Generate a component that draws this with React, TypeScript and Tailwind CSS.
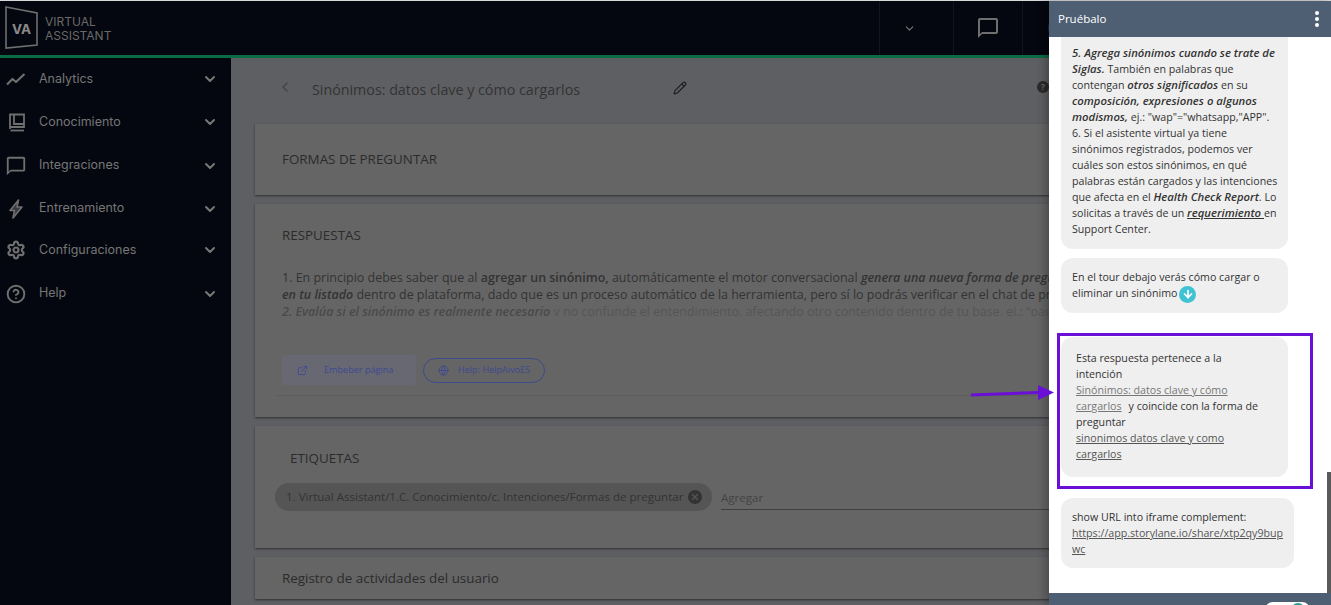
import { ArrowDown, ChevronDown, ChevronLeft, Pencil, Globe, ExternalLink, Settings, CircleHelp, X } from "lucide-react";
import { MdOutlineChatBubbleOutline } from "react-icons/md";
import type { ReactNode } from "react";

const navItems = [
  {
    label: "Analytics",
    h: "h-[42px]",
    icon: (
      <svg width="20" height="20" viewBox="0 0 20 20" fill="none" stroke="currentColor" strokeWidth="2.2" strokeLinejoin="round">
        <path d="M1 15.5 L6.5 10 L10 13 L18.5 5" />
      </svg>
    ),
  },
  {
    label: "Conocimiento",
    h: "h-[44px]",
    icon: (
      <svg width="20" height="20" viewBox="0 0 20 20" fill="none" stroke="currentColor" strokeWidth="1.8" className="translate-x-[1px]">
        <path d="M3 17 V2.5 H17 V15 H3" />
        <path d="M7 2.5 V12 H17" />
        <path d="M3.5 18.5 H17" />
      </svg>
    ),
  },
  {
    label: "Integraciones",
    h: "h-[43px]",
    icon: <MdOutlineChatBubbleOutline size={22} className="-ml-[1px]" />,
  },
  {
    label: "Entrenamiento",
    h: "h-[43px]",
    icon: (
      <svg width="20" height="20" viewBox="0 0 20 20" fill="currentColor" stroke="currentColor" strokeWidth="1.6" strokeLinejoin="round">
        <path d="M12.5 1 L4 11.5 H8.5 L7 19 L16 8 H11 Z" fillOpacity="0.5" />
      </svg>
    ),
  },
  {
    label: "Configuraciones",
    h: "h-[42px] pb-[2px]",
    icon: <Settings size={20} strokeWidth={2.6} />,
  },
  {
    label: "Help",
    h: "h-[43px]",
    icon: <CircleHelp size={20} strokeWidth={2.3} />,
  },
];

function Card({ className, children }: { className: string; children: ReactNode }) {
  return <section className={`bg-[#656565] shadow-[0_1px_2px_rgba(0,0,0,0.5)] ${className}`}>{children}</section>;
}

function Bubble({ className, children }: { className: string; children: ReactNode }) {
  return <div className={`rounded-xl bg-[#efefef] text-[10.65px] leading-[16px] text-[#333] ${className}`}>{children}</div>;
}

function Em({ children }: { children: ReactNode }) {
  return <strong className="text-[11.3px] font-semibold italic">{children}</strong>;
}

export default function App() {
  return (
    <div className="relative flex h-[605px] w-[1331px] flex-col overflow-hidden bg-[#5e5f62] font-['Open_Sans',sans-serif]">
      <header className="flex h-[58px] shrink-0 items-stretch border-t border-[#d8d8d8] border-b-[3px] border-b-[#0b6b45] bg-[#04070f]">
        <div className="flex items-center gap-[6px] pl-[5px]">
          <svg width="34" height="44" viewBox="0 0 34 44" fill="none" className="text-[#6e6e6e]">
            <path d="M1 1 L32 7 L32 39 L1 42 Z" stroke="currentColor" strokeWidth="1.6" />
            <text x="7" y="28" fill="#8a8a8a" fontSize="13.5" fontWeight="700" fontFamily="Inter, sans-serif">VA</text>
          </svg>
          <div className="pt-[2px] font-['Inter',sans-serif] text-[12px] leading-[14px] text-[#6a6a6a]">
            <div>VIRTUAL</div>
            <div>ASSISTANT</div>
          </div>
        </div>
        <div className="ml-auto flex w-[452px] items-stretch">
          <div className="flex w-[75px] items-center justify-center border-x border-[#10151f] pr-[14px] text-[#777]">
            <ChevronDown size={13} strokeWidth={2} />
          </div>
          <div className="flex w-[69px] items-center justify-center border-r border-[#10151f] text-[#6f6f6f]">
            <MdOutlineChatBubbleOutline size={24} />
          </div>
          <div className="ml-[25px] mt-[14px] h-[26px] w-[26px] rounded-full bg-[#1a2a3a]" />
        </div>
      </header>

      <div className="flex min-h-0 flex-1">
        <nav className="w-[231px] shrink-0 bg-[#04070f] font-['Inter',sans-serif] text-[12.5px] text-[#767676]">
          {navItems.map((item) => (
            <div key={item.label} className={`flex items-center pl-[6px] pr-[13px] ${item.h}`}>
              <span className="flex w-[33px] shrink-0 text-[#6f6f6f]">{item.icon}</span>
              <span className="flex-1">{item.label}</span>
              <ChevronDown size={16} strokeWidth={3} className="text-[#777]" />
            </div>
          ))}
        </nav>

        <main className="min-w-0 flex-1 overflow-hidden pl-[24px] text-[#2b2b2b]">
          <div className="flex h-[66px] items-center pb-[2px] pl-[22px]">
            <ChevronLeft size={16} className="mr-[19px] -mt-[6px] text-[#444]" />
            <h1 className="text-[14.27px] font-normal text-[#333]">Sinónimos: datos clave y cómo cargarlos</h1>
            <Pencil size={14} className="ml-[93px] -mt-[4px] text-[#1f1f1f]" />
            <span className="ml-[350px] -mt-[7px] flex h-[12px] w-[12px] items-center justify-center rounded-full bg-[#2b2b2b] text-[9px] font-bold text-[#666]">?</span>
          </div>

          <Card className="flex h-[71px] items-center pb-[1px] pl-[27px] text-[13.4px]">FORMAS DE PREGUNTAR</Card>

          <Card className="mt-[9px] h-[213px] pl-[27px] pt-[21px]">
            <h2 className="text-[13.4px] leading-[20px]">RESPUESTAS</h2>
            <div className="mt-[24px] h-[47px] w-[790px] overflow-hidden whitespace-nowrap text-[12.48px] leading-[17px] text-[#333]">
              <p>1. En principio debes saber que al <strong className="font-semibold">agregar un sinónimo,</strong> automáticamente el motor conversacional <strong className="font-semibold italic">genera una nueva forma de preguntar</strong></p>
              <p><strong className="font-semibold italic">en tu listado</strong> dentro de plataforma, dado que es un proceso automático de la herramienta, pero sí lo podrás verificar en el chat de pruebas</p>
              <p className="text-[#555]"><strong className="font-semibold italic text-[#4a4a4a]">2. Evalúa si el sinónimo es realmente necesario</strong> y no confunde el entendimiento, afectando otro contenido dentro de tu base, ej.: “pago”</p>
            </div>
            <div className="mt-[39px] flex items-center gap-[7px] text-[9.1px]">
              <div className="flex h-[30px] w-[134px] items-center rounded-[3px] bg-[#686873] pl-[15px] text-[#3d4a8f]">
                <ExternalLink size={11} className="mr-[16px]" />
                Embeber página
              </div>
              <div className="flex h-[25px] w-[122px] items-center rounded-full border border-[#3d4a8f] pl-[14px] text-[#3d4a8f]">
                <Globe size={11} className="mr-[9px]" />
                Help: HelpAivoES
              </div>
            </div>
            <div className="-ml-[6px] mt-[10px] h-px bg-[#5d5d5d]" />
          </Card>

          <Card className="mt-[9px] h-[122px] pt-[22px]">
            <h2 className="pl-[35px] text-[13.4px] leading-[20px]">ETIQUETAS</h2>
            <div className="mt-[15px] flex items-center pl-[20px]">
              <div className="flex h-[28px] w-[437px] shrink-0 items-center whitespace-nowrap rounded-full bg-[#555] pl-[11px] text-[11.55px] text-[#333]">
                1. Virtual Assistant/1.C. Conocimiento/c. Intenciones/Formas de preguntar
                <span className="ml-[5px] flex h-[14px] w-[14px] items-center justify-center rounded-full bg-[#333] text-[#555]">
                  <X size={10} strokeWidth={3} />
                </span>
              </div>
              <div className="ml-[9px] h-[25px] flex-1 border-b border-[#3f3f3f] text-[11.55px] leading-[25px] text-[#444]">Agregar</div>
            </div>
          </Card>

          <Card className="mt-[9px] flex h-[42px] items-center pl-[27px] text-[13.4px]">Registro de actividades del usuario</Card>
        </main>
      </div>

      <aside className="absolute bottom-0 right-0 top-[1px] flex w-[282px] flex-col bg-white shadow-[-4px_0_8px_rgba(0,0,0,0.25)]">
        <div className="flex h-[36px] shrink-0 items-center justify-between bg-[#4f5f73] pl-[9px] pr-[12px] text-[11.5px] text-white">
          <span>Pruébalo</span>
          <span className="flex flex-col gap-[2px]">
            <i className="h-[4px] w-[4px] rounded-full bg-white" />
            <i className="h-[4px] w-[4px] rounded-full bg-white" />
            <i className="h-[4px] w-[4px] rounded-full bg-white" />
          </span>
        </div>

        <div className="min-h-0 flex-1 overflow-hidden pl-[12px]">
          <Bubble className="h-[212px] w-[227px] whitespace-nowrap rounded-t-none pl-[11px] pt-[8px]">
            <Em>5. Agrega sinónimos cuando se trate de</Em>
            <br />
            <Em>Siglas.</Em> También en palabras que
            <br />
            contengan <Em>otros significados</Em> en su
            <br />
            <Em>composición, expresiones o algunos</Em>
            <br />
            <Em>modismos,</Em> ej.: "wap"="whatsapp,"APP".
            <br />
            6. Si el asistente virtual ya tiene
            <br />
            sinónimos registrados, podemos ver
            <br />
            cuáles son estos sinónimos, en qué
            <br />
            palabras están cargados y las intenciones
            <br />
            que afecta en el <Em>Health Check Report</Em>. Lo
            <br />
            solicitas a través de un <a className="text-[11.3px] font-semibold italic underline">requerimiento </a>en
            <br />
            Support Center.
          </Bubble>
          <Bubble className="mt-[9px] h-[55px] w-[227px] px-[11px] pt-[11px]">
            En el tour debajo verás cómo cargar o eliminar un sinónimo
            <span className="ml-[2px] inline-flex h-[17px] w-[17px] items-center justify-center rounded-full bg-[#3fc3d4] align-middle text-white">
              <ArrowDown size={12} strokeWidth={3.5} />
            </span>
          </Bubble>
          <Bubble className="mt-[24px] h-[140px] w-[227px] px-[15px] pt-[13px]">
            Esta respuesta pertenece a la
            <br />
            intención
            <br />
            <a className="text-[#777] underline">Sinónimos: datos clave y cómo</a>
            <br />
            <a className="text-[#777] underline">cargarlos</a>
            <span className="ml-[7px]">y coincide con la forma de</span>
            <br />
            preguntar
            <br />
            <a className="text-[#555] underline">sinonimos datos clave y como</a>
            <br />
            <a className="text-[#555] underline">cargarlos</a>
          </Bubble>
          <Bubble className="mt-[21px] h-[70px] w-[233px] px-[11px] pt-[11px]">
            show URL into iframe complement:
            <br />
            <a className="break-all text-[#555] underline">https://app.storylane.io/share/xtp2qy9bupwc</a>
          </Bubble>
        </div>

        <div className="relative h-[12px] shrink-0 bg-[#4f5f73]">
          <div className="absolute left-[216px] top-[9px] h-[16px] w-[45px] rounded-full bg-white" />
          <div className="absolute left-[242px] top-[10px] h-[14px] w-[14px] rounded-full bg-[#2a9d8f]" />
        </div>

        <div className="absolute right-0 top-[471px] h-[121px] w-[4px] bg-[#5a5a5a]" />
        <div className="absolute left-[8px] top-[332px] h-[156px] w-[256px] border-[3px] border-[#6a0fd6]" />
      </aside>

      <svg className="absolute left-[968px] top-[383px]" width="90" height="20" viewBox="0 0 90 20">
        <path d="M3 12 L72 9.5" stroke="#6a0fd6" strokeWidth="3" />
        <path d="M70 2 L86 9.5 L70 17 Z" fill="#6a0fd6" />
      </svg>
    </div>
  );
}
